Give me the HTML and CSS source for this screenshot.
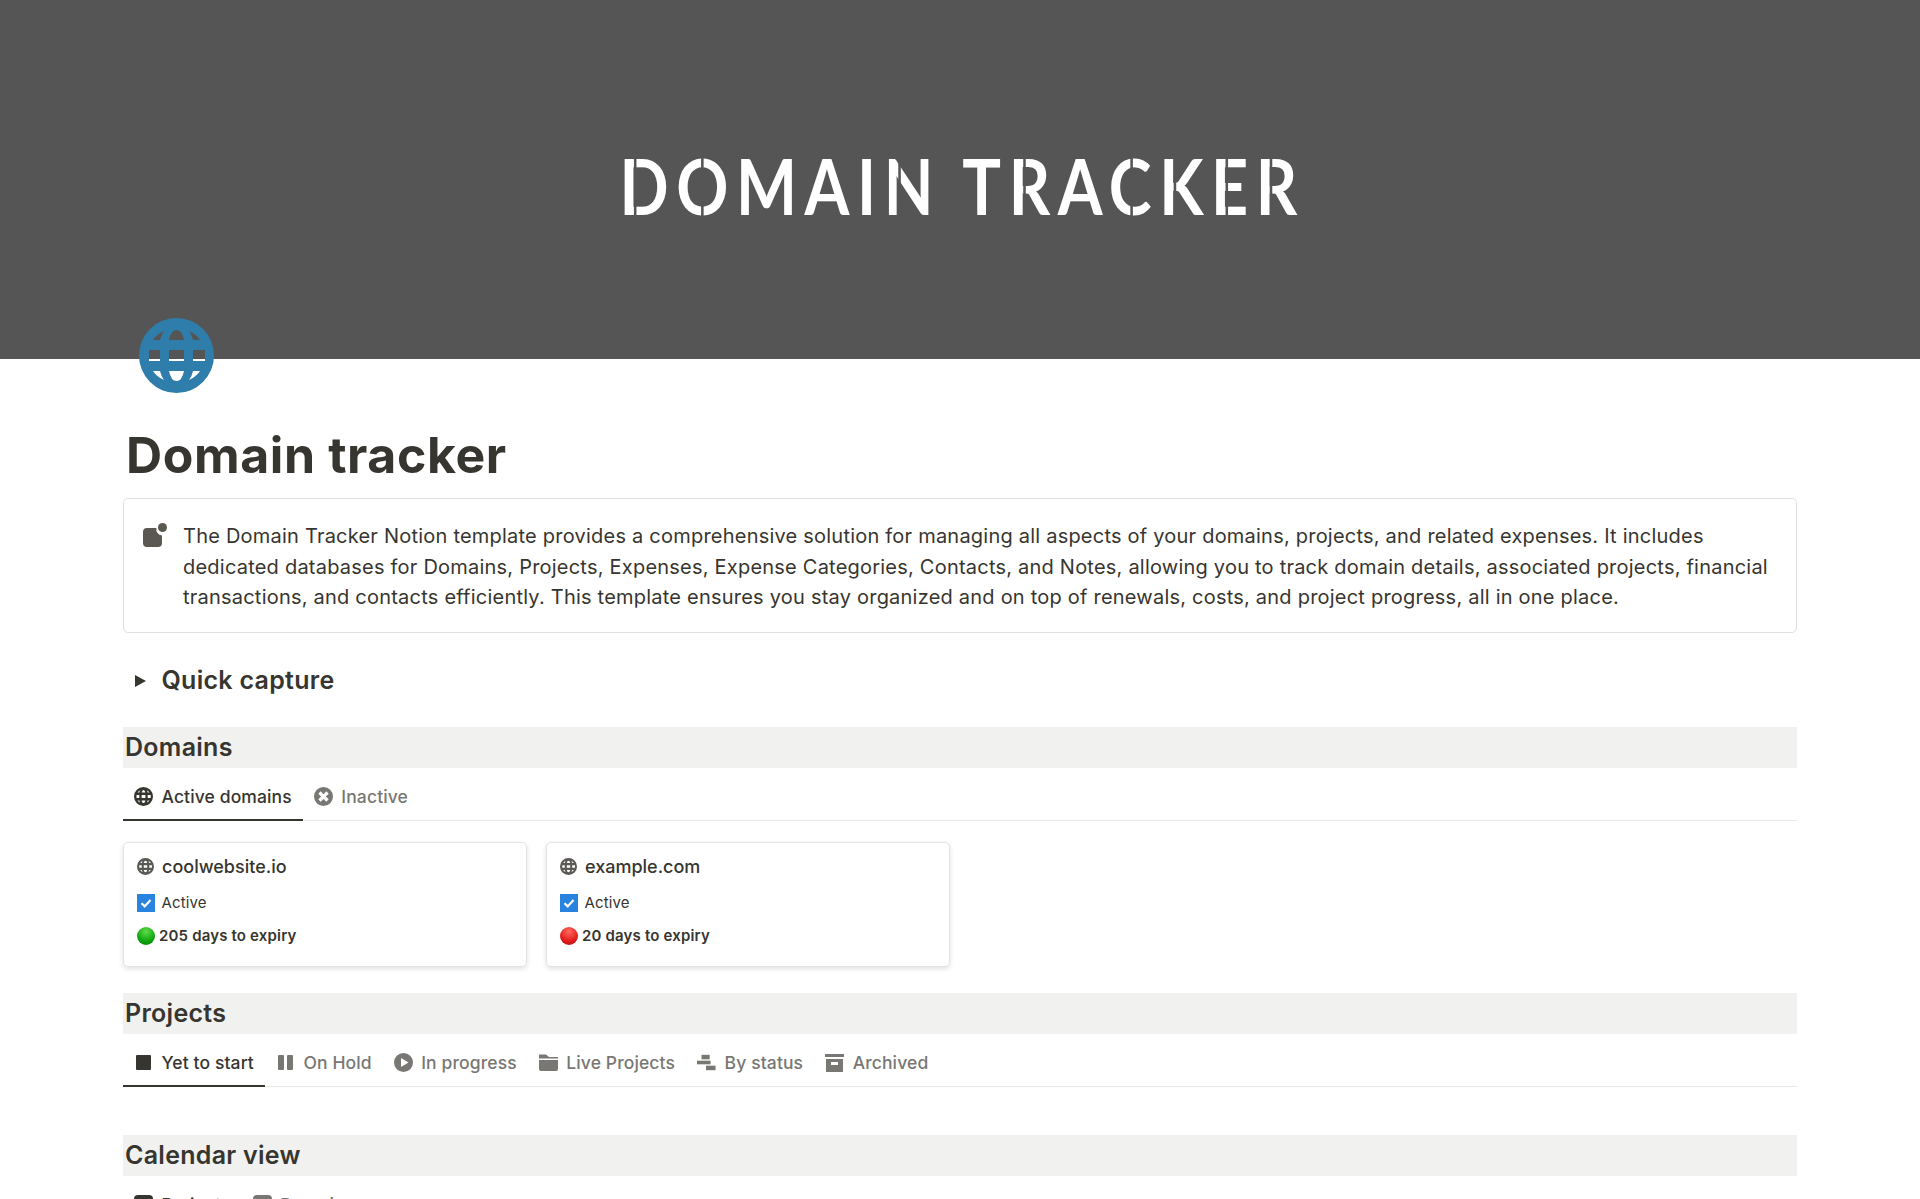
FILE: index.html
```html
<!DOCTYPE html>
<html lang="en">
<head>
  <meta charset="UTF-8">
  <title>Domain tracker</title>
  <link rel="stylesheet" href="styles.css">
</head>
<body>

<svg class="defs" width="0" height="0">
  <symbol id="globe" viewBox="0 0 75 75">
    <path fill="currentColor" fill-rule="evenodd" d="M37.5 0a37.5 37.5 0 1 0 0 75a37.5 37.5 0 1 0 0-75z
      M30 22Q32 12 37.5 12Q43 12 45 22z M14 22Q18 16 25 13Q22 17 21 22z M61 22Q57 16 50 13Q53 17 54 22z
      M10 32h11v11h-11z M30 32h15v11h-15z M54 32h12v11h-12z
      M30 53Q32 63 37.5 63Q43 63 45 53z M14 53Q18 59 25 62Q22 58 21 53z M61 53Q57 59 50 62Q53 58 54 53z"/>
  </symbol>
</svg>

<header class="cover">
  <div class="cover-title"><span class="stem">D</span><span class="mid">O</span>MAI<span class="stem">N</span> T<span class="stem">R</span>A<span class="mid">C</span><span class="stem">K</span><span class="stem">E</span><span class="stem">R</span></div>
  <svg class="page-icon"><use href="#globe"/></svg>
</header>

<main class="page">
  <h1>Domain tracker</h1>

  <div class="callout">
    <svg class="callout-icon" viewBox="0 0 24 24">
      <path fill="currentColor" d="M4 5h9.5a6 6 0 0 0 5.5 7.5V20a4 4 0 0 1-4 4H4a4 4 0 0 1-4-4V9a4 4 0 0 1 4-4z"/>
      <circle fill="currentColor" cx="19.5" cy="4.5" r="4.5"/>
    </svg>
    <p>The Domain Tracker Notion template provides a comprehensive solution for managing all aspects of your domains, projects, and related expenses. It includes dedicated databases for Domains, Projects, Expenses, Expense Categories, Contacts, and Notes, allowing you to track domain details, associated projects, financial transactions, and contacts efficiently. This template ensures you stay organized and on top of renewals, costs, and project progress, all in one place.</p>
  </div>

  <div class="toggle">
    <span class="caret"></span>
    <h3>Quick capture</h3>
  </div>

  <h2 class="section first">Domains</h2>
  <div class="tabs">
    <div class="tab active">
      <svg class="tab-icon"><use href="#globe"/></svg>
      <span>Active domains</span>
    </div>
    <div class="tab">
      <svg class="tab-icon" viewBox="0 0 20 20">
        <path fill="currentColor" fill-rule="evenodd" d="M10 0a10 10 0 1 0 0 20a10 10 0 1 0 0-20z
          M7 4.500l3 3l3-3l2.500 2.500l-3 3l3 3l-2.500 2.500l-3-3l-3 3L4.500 13l3-3l-3-3z"/>
      </svg>
      <span>Inactive</span>
    </div>
  </div>

  <div class="cards">
    <div class="card">
      <div class="card-title">
        <svg class="card-globe"><use href="#globe"/></svg>
        <span>coolwebsite.io</span>
      </div>
      <div class="card-prop">
        <span class="check">
          <svg viewBox="0 0 18 18"><path d="M4.5 9.2l3.2 3.2l5.8-6.4"/></svg>
        </span>
        <span>Active</span>
      </div>
      <div class="card-expiry">
        <span class="dot green"></span>
        <span>205 days to expiry</span>
      </div>
    </div>
    <div class="card">
      <div class="card-title">
        <svg class="card-globe"><use href="#globe"/></svg>
        <span>example.com</span>
      </div>
      <div class="card-prop">
        <span class="check">
          <svg viewBox="0 0 18 18"><path d="M4.5 9.2l3.2 3.2l5.8-6.4"/></svg>
        </span>
        <span>Active</span>
      </div>
      <div class="card-expiry">
        <span class="dot red"></span>
        <span>20 days to expiry</span>
      </div>
    </div>
  </div>

  <h2 class="section">Projects</h2>
  <div class="tabs">
    <div class="tab active">
      <svg class="tab-icon" viewBox="0 0 19 19"><rect x="2" y="2" width="15" height="15" rx="1" fill="currentColor"/></svg>
      <span>Yet to start</span>
    </div>
    <div class="tab">
      <svg class="tab-icon" viewBox="0 0 19 19">
        <rect x="2" y="2" width="6" height="15" rx="1" fill="currentColor"/>
        <rect x="11" y="2" width="6" height="15" rx="1" fill="currentColor"/>
      </svg>
      <span>On Hold</span>
    </div>
    <div class="tab">
      <svg class="tab-icon" viewBox="0 0 19 19">
        <path fill="currentColor" fill-rule="evenodd" d="M9.5 0a9.5 9.5 0 1 0 0 19a9.5 9.5 0 1 0 0-19z M7 5l7.500 4.500L7 14z"/>
      </svg>
      <span>In progress</span>
    </div>
    <div class="tab">
      <svg class="tab-icon" viewBox="0 0 19 19">
        <path fill="currentColor" d="M0 1.500h7l3 2.500h9v1.500H0z M0 7h19v9a2 2 0 0 1-2 2H2a2 2 0 0 1-2-2z"/>
      </svg>
      <span>Live Projects</span>
    </div>
    <div class="tab">
      <svg class="tab-icon" viewBox="0 0 21 19">
        <rect x="5" y="1" width="9" height="5" fill="currentColor"/>
        <rect x="0" y="7.500" width="15" height="4" fill="currentColor"/>
        <rect x="10" y="13" width="10.500" height="5" fill="currentColor"/>
      </svg>
      <span>By status</span>
    </div>
    <div class="tab">
      <svg class="tab-icon" viewBox="0 0 19 19">
        <path fill="currentColor" fill-rule="evenodd" d="M0 1h19v3H0z M1 6h17v13H1z M6 9v3h7V9z"/>
      </svg>
      <span>Archived</span>
    </div>
  </div>

  <h2 class="section calendar">Calendar view</h2>
  <div class="tabs">
    <div class="tab active">
      <svg class="tab-icon" viewBox="0 0 19 19"><rect x="0" y="0" width="19" height="19" rx="4" fill="currentColor"/></svg>
      <span>Projects</span>
    </div>
    <div class="tab">
      <svg class="tab-icon" viewBox="0 0 19 19"><rect x="0" y="0" width="19" height="19" rx="4" fill="currentColor"/></svg>
      <span>Domains</span>
    </div>
  </div>
</main>

</body>
</html>
```

FILE: styles.css
```css
html, body {
  margin: 0;
  padding: 0;
  height: 1199px;
  overflow: hidden;
  background: #fff;
  color: #37352f;
  font-family: Inter, "Noto Sans", sans-serif;
  font-optical-sizing: none;
}
.defs {
  position: absolute;
}

.cover {
  position: relative;
  height: 359px;
  background: #555;
  display: flex;
  justify-content: center;
  padding-top: 148px;
  box-sizing: border-box;
}
.cover-title {
  font-family: Lato, sans-serif;
  font-size: 76px;
  line-height: 1;
  font-weight: 700;
  letter-spacing: 8.9px;
  color: #fff;
  white-space: nowrap;
  transform: scaleX(0.85);
  margin-left: 4px;
}
/* stencil slits cut through the title letters */
.stem, .mid {
  position: relative;
}
.stem::after, .mid::after {
  content: "";
  position: absolute;
  top: 0;
  bottom: 0;
  width: 3px;
  background: #555;
}
.stem::after {
  left: 0.22em;
}
.mid::after {
  left: 42%;
}
.page-icon {
  position: absolute;
  left: 139px;
  top: 318px;
  width: 75px;
  height: 75px;
  color: #2e7dab;
}

.page {
  padding: 0 123px;
}
h1 {
  margin: 0;
  padding: 66px 3px 0;
  font-size: 50px;
  line-height: 60px;
  font-weight: 700;
  letter-spacing: 0.6px;
}

.callout {
  display: flex;
  margin-top: 13px;
  padding: 22px 20px 20px 19px;
  border: 1px solid #dfdfdd;
  border-radius: 5px;
  height: 135px;
  box-sizing: border-box;
}
.callout-icon {
  flex: none;
  width: 24px;
  height: 24px;
  margin-top: 2px;
  color: #5a5850;
}
.callout p {
  margin: 0 0 0 16px;
  font-size: 20px;
  line-height: 30.5px;
  letter-spacing: 0.22px;
}

.toggle {
  display: flex;
  align-items: center;
  margin-top: 28px;
  height: 38px;
}
.caret {
  width: 0;
  height: 0;
  margin: 2px 0 0 12px;
  border-left: 11px solid #37352f;
  border-top: 6px solid transparent;
  border-bottom: 6px solid transparent;
}
.toggle h3 {
  margin: 0 0 0 15.5px;
  font-size: 25px;
  line-height: 38px;
  font-weight: 600;
  letter-spacing: 0.28px;
}

.section {
  margin: 26px 0 0;
  height: 41px;
  padding: 0 2px;
  background: #f1f1ef;
  font-size: 25px;
  line-height: 41px;
  font-weight: 600;
  letter-spacing: 0.28px;
}
.section.first {
  margin-top: 28px;
}
.section.calendar {
  margin-top: 48px;
}

.tabs {
  display: flex;
  height: 53px;
  box-sizing: border-box;
  border-bottom: 1px solid #e9e9e7;
}
.tab {
  display: flex;
  align-items: center;
  gap: 8.5px;
  height: 53px;
  padding: 4px 11px 0;
  box-sizing: border-box;
  font-size: 17.5px;
  font-weight: 500;
  letter-spacing: 0.12px;
  color: #787774;
}
.tab.active {
  color: #37352f;
  box-shadow: inset 0 -2px 0 #37352f;
}
.tab-icon {
  flex: none;
  width: 19px;
  height: 19px;
}

.cards {
  display: flex;
  gap: 19px;
  margin-top: 21px;
}
.card {
  width: 404px;
  height: 125px;
  box-sizing: border-box;
  padding: 11px 13px;
  border: 1px solid #e3e3e1;
  border-radius: 5px;
  box-shadow: 0 2px 5px rgba(15, 15, 15, 0.12);
}
.card-title {
  display: flex;
  align-items: center;
  gap: 8px;
  height: 25px;
  font-size: 18px;
  font-weight: 450;
}
.card-globe {
  flex: none;
  width: 17px;
  height: 17px;
  color: #5a5955;
}
.card-prop {
  display: flex;
  align-items: center;
  gap: 6.5px;
  margin-top: 12px;
  height: 23px;
  font-size: 15px;
  letter-spacing: 0.15px;
}
.check {
  flex: none;
  width: 18px;
  height: 18px;
  background: #2783de;
}
.check svg {
  display: block;
  fill: none;
  stroke: #fff;
  stroke-width: 2.2;
}
.card-expiry {
  display: flex;
  align-items: center;
  gap: 4px;
  margin-top: 10px;
  height: 23px;
  font-size: 15px;
  font-weight: 600;
  letter-spacing: 0.17px;
}
.dot {
  flex: none;
  width: 18px;
  height: 18px;
  border-radius: 50%;
}
.dot.green {
  background: radial-gradient(circle at 50% 25%, #5fdc4a, #0ea50e 60%, #067a06);
}
.dot.red {
  background: radial-gradient(circle at 50% 25%, #ff6a5e, #e21c1c 60%, #a80d0d);
}
```
